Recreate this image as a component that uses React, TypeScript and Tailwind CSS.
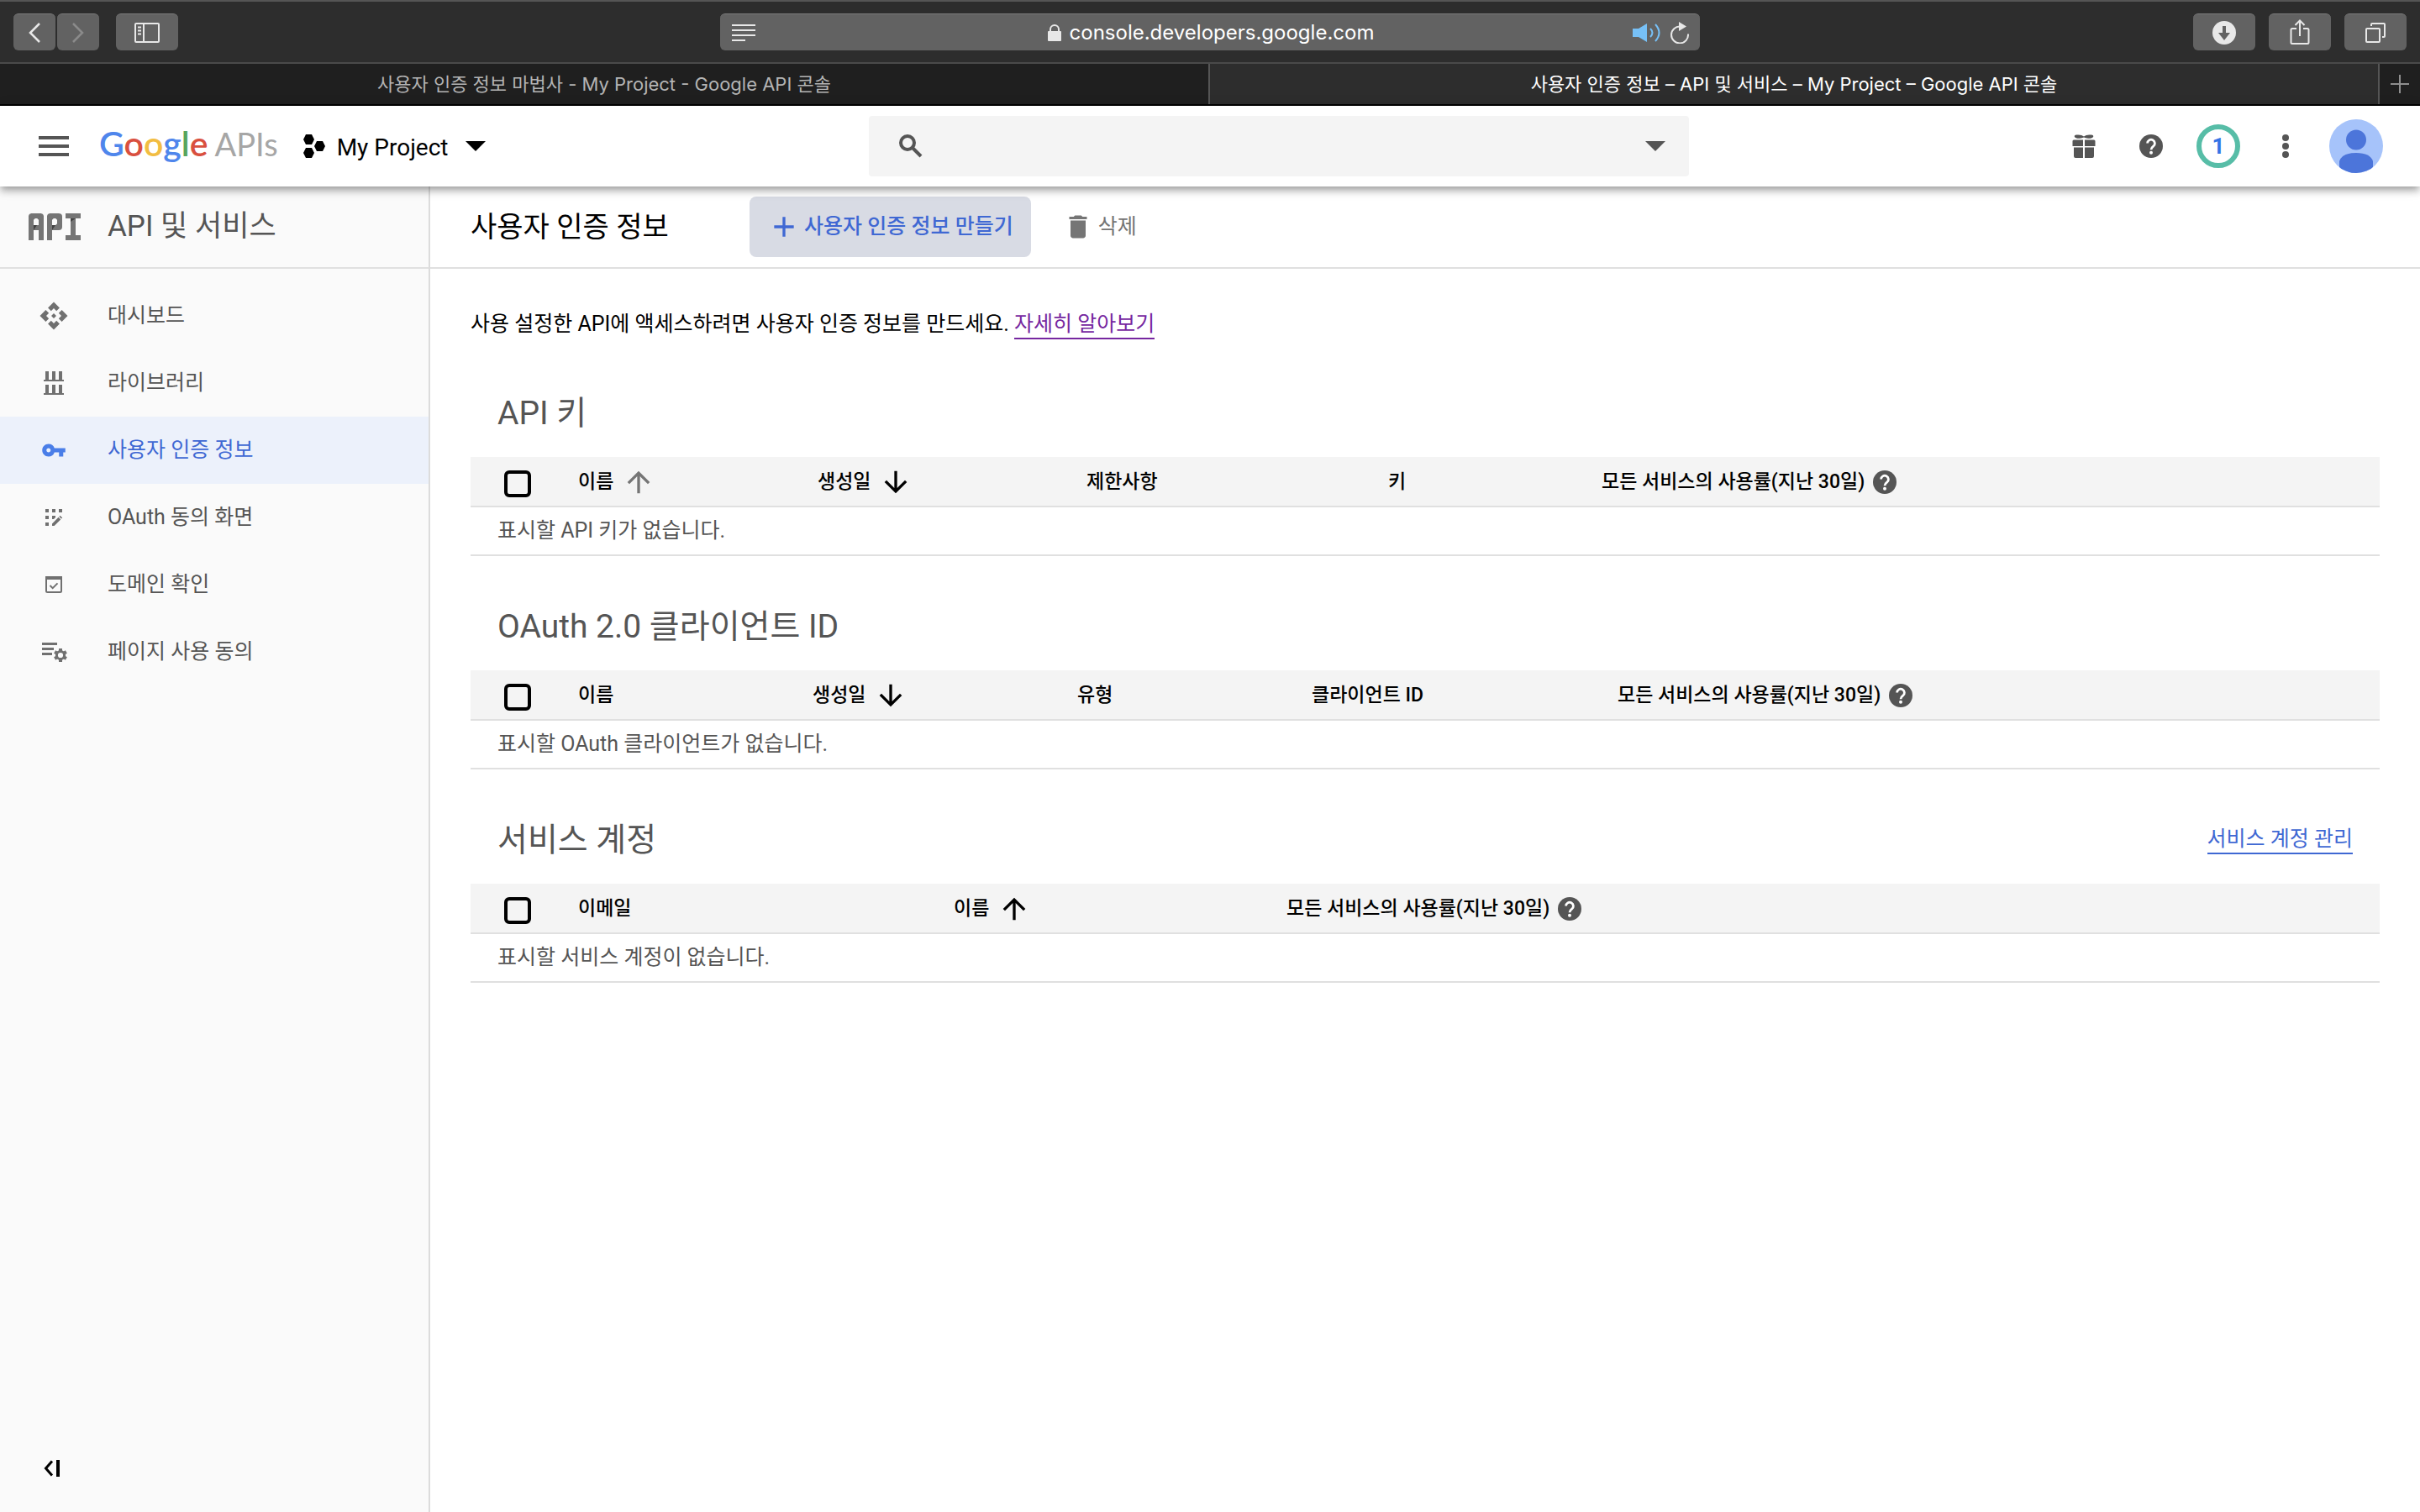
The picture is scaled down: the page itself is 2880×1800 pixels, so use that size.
import type { ReactNode } from 'react';
import { MdAdd, MdApi, MdArrowDownward, MdArrowUpward, MdDelete, MdVpnKey } from 'react-icons/md';

function HelpIcon() {
    return (
        <svg className="size-7 shrink-0" viewBox="0 0 28 28" fill="none">
            <circle cx="14" cy="14" r="14" fill="#555" />
            <path d="M9.600 10.600a4.400 4.400 0 1 1 7 3.600c-1.600 1.200-2.600 2-2.600 4" stroke="#fff" strokeWidth="2.800" />
            <circle cx="14" cy="21.800" r="2" fill="#fff" />
        </svg>
    );
}

function Caret() {
    return (
        <svg className="h-3 w-6 shrink-0" viewBox="0 0 24 12" fill="currentColor">
            <path d="M0 0h24L12 12z" />
        </svg>
    );
}

function ApiBadge() {
    return (
        <svg className="h-8 w-[62px] shrink-0" viewBox="0 0 62 32" fill="#757575">
            <rect x="0" y="3" width="6" height="29" />
            <rect x="12" y="3" width="6" height="29" />
            <rect x="3" y="0" width="12" height="6" />
            <circle cx="4" cy="4" r="4" />
            <circle cx="14" cy="4" r="4" />
            <rect x="6" y="14" width="6" height="6" />
            <rect x="22" y="3" width="6" height="29" />
            <rect x="34" y="4" width="6" height="12" />
            <rect x="25" y="0" width="11" height="6" />
            <circle cx="26" cy="4" r="4" />
            <circle cx="36" cy="4" r="4" />
            <circle cx="36" cy="16" r="4" />
            <rect x="28" y="14" width="8" height="6" />
            <rect x="44" y="0" width="18" height="6" />
            <rect x="50" y="0" width="6" height="32" />
            <rect x="44" y="26" width="18" height="6" />
            <path d="M6 14h4l-4 6zM28 14h4l-4 6zM50 6h6l-6 4z" fill="#424242" />
        </svg>
    );
}

function LibraryIcon() {
    return (
        <svg className="size-8" viewBox="0 0 32 32" fill="currentColor">
            <path d="M6 2h4v10H6zM14 2h4v10h-4zM22 2h4v10h-4zM4 12h24v2H4zM6 18h4v10H6zM14 18h4v10h-4zM22 18h4v10h-4zM4 28h24v2H4z" />
        </svg>
    );
}

function ConsentIcon() {
    return (
        <svg className="size-8" viewBox="0 0 32 32" fill="currentColor">
            <path d="M6 6h4v4H6zM14 6h4v4h-4zM22 6h4v4h-4zM6 14h4v4H6zM14 14h4v2l-2 2h-2zM6 22h4v4H6zM14 23.400l7.600-7.600 2.600 2.600-7.600 7.600H14zM22.400 15l1.200-1.200 2.600 2.600L25 17.600z" />
        </svg>
    );
}

function DomainIcon() {
    return (
        <svg className="size-8" viewBox="0 0 32 32" fill="none" stroke="currentColor" strokeWidth="2">
            <rect x="7" y="7" width="18" height="18" rx="1.500" />
            <path d="M6 8h20" strokeWidth="4" />
            <path d="M11.500 17l3.200 3.200 5.800-5.800" />
        </svg>
    );
}

function AgreementIcon() {
    return (
        <svg className="size-8" viewBox="0 0 32 32" fill="none" stroke="currentColor">
            <path d="M2 6.500h18M2 12.500h14M2 18.500h12" strokeWidth="3" />
            <circle cx="24" cy="20" r="4.600" strokeWidth="3" />
            <path d="M24 12v3M24 25v3M17.100 16l2.600 1.500M28.300 22.500l2.600 1.500M17.100 24l2.600-1.500M28.300 17.500l2.600-1.500" strokeWidth="4" />
        </svg>
    );
}

function ToolbarButton({ label, className, children }: { label: string; className: string; children: ReactNode }) {
    return (
        <button
            type="button"
            aria-label={label}
            className={`flex h-11 items-center justify-center rounded-md border-t border-[#7a7a7a] bg-[#626262] text-[#e8e8e8] ${className}`}
        >
            {children}
        </button>
    );
}

function BrowserChrome() {
    return (
        <div className="font-['Inter','Noto_Sans_CJK_KR',sans-serif]">
            <div className="grid h-[76px] grid-cols-[1fr_auto_1fr] items-center border-y-2 border-t-[#555] border-b-[#4a4a4a] bg-[#2d2d2d] px-4">
                <div className="flex">
                    <ToolbarButton label="뒤로" className="w-[50px]">
                        <svg className="h-6 w-4" viewBox="0 0 16 24" fill="none" stroke="currentColor" strokeWidth="2.500">
                            <path d="M14 1L3 12l11 11" />
                        </svg>
                    </ToolbarButton>
                    <ToolbarButton label="앞으로" className="ml-0.5 w-[50px]">
                        <svg className="h-6 w-4" viewBox="0 0 16 24" fill="none" stroke="#8b8b8b" strokeWidth="2.500">
                            <path d="M2 1l11 11L2 23" />
                        </svg>
                    </ToolbarButton>
                    <ToolbarButton label="사이드바" className="ml-5 w-[74px]">
                        <svg className="h-6 w-[30px]" viewBox="0 0 30 24" fill="none" stroke="currentColor" strokeWidth="2">
                            <rect x="1" y="1" width="28" height="22" rx="1" />
                            <path d="M11 1v22M4 5.500h4M4 9.500h4M4 13.500h4" />
                        </svg>
                    </ToolbarButton>
                </div>

                <div className="flex h-11 w-[1166px] items-center rounded-md border-t border-[#7a7a7a] bg-[#626262] pr-3 pl-3.5 text-[#e8e8e8]">
                    <svg className="h-5 w-7 shrink-0" viewBox="0 0 28 20" fill="currentColor">
                        <path d="M0 0h28v2H0zM0 6h28v2H0zM0 12h28v2H0zM0 18h16v2H0z" />
                    </svg>
                    <label className="ml-10 flex flex-1 items-center justify-center gap-2.5">
                        <svg className="h-5 w-4" viewBox="0 0 16 20" fill="currentColor">
                            <rect y="8" width="16" height="12" rx="1" />
                            <path d="M3 9V6a5 5 0 0 1 10 0v3" fill="none" stroke="currentColor" strokeWidth="2" />
                        </svg>
                        <input
                            aria-label="주소"
                            defaultValue="console.developers.google.com"
                            className="field-sizing-content text-2xl text-white outline-none"
                        />
                    </label>
                    <svg className="h-6 w-[34px] shrink-0" viewBox="0 0 34 24" fill="none" stroke="#77c0f6" strokeWidth="2">
                        <path d="M0 7h7l10-6v22l-10-6H0z" fill="#77c0f6" stroke="none" />
                        <path d="M21 7q5 5 0 10M27 2q9 10 0 20" />
                    </svg>
                    <svg className="ml-2.5 h-[26px] w-6 shrink-0" viewBox="0 0 24 26" fill="none" stroke="currentColor" strokeWidth="2">
                        <path d="M13 5.500a10 10 0 1 0 9 9" />
                        <path d="M11 0l9 5.500-9 5.500z" fill="currentColor" stroke="none" />
                    </svg>
                </div>

                <div className="flex justify-end gap-4">
                    <ToolbarButton label="다운로드" className="w-[74px]">
                        <svg className="size-7" viewBox="0 0 28 28">
                            <circle cx="14" cy="14" r="14" fill="currentColor" />
                            <path d="M12 6h4v8h5l-7 9-7-9h5z" fill="#626262" />
                        </svg>
                    </ToolbarButton>
                    <ToolbarButton label="공유" className="w-[74px]">
                        <svg className="h-8 w-6" viewBox="0 0 24 32" fill="none" stroke="currentColor" strokeWidth="2">
                            <path d="M8 11H3q-1.500 0-1.500 1.500v15q0 1.500 1.500 1.500h18q1.500 0 1.500-1.500v-15Q22.500 11 21 11h-5M12 20V2M6.500 7L12 1.500 17.500 7" />
                        </svg>
                    </ToolbarButton>
                    <ToolbarButton label="탭 개요" className="w-[74px]">
                        <svg className="size-6" viewBox="0 0 24 24" fill="none" stroke="currentColor" strokeWidth="2">
                            <rect x="1" y="7" width="16" height="16" rx="1" />
                            <path d="M7 4V2q0-1 1-1h14q1 0 1 1v14q0 1-1 1h-2" />
                        </svg>
                    </ToolbarButton>
                </div>
            </div>

            <div className="flex h-[50px] border-b-2 border-black bg-[#1f1f1f] text-[22px]">
                <button type="button" className="w-1/2 border-r-2 border-[#555] text-[#b4b4b4]">
                    사용자 인증 정보 마법사 - My Project - Google API 콘솔
                </button>
                <button type="button" className="flex-1 border-r-2 border-[#555] bg-[#2d2d2d] text-white">
                    사용자 인증 정보 – API 및 서비스 – My Project – Google API 콘솔
                </button>
                <button type="button" aria-label="새 탭" className="flex w-12 items-center justify-center">
                    <svg className="size-[22px]" viewBox="0 0 22 22" stroke="#8f8f8f" strokeWidth="2">
                        <path d="M11 0v22M0 11h22" />
                    </svg>
                </button>
            </div>
        </div>
    );
}

function AppHeader() {
    return (
        <header className="relative z-10 flex h-24 items-center bg-white shadow-[0_6px_8px_rgba(0,0,0,0.2),0_6px_6px_-4px_rgba(0,0,0,0.14),0_2px_16px_rgba(0,0,0,0.12)]">
            <div className="flex w-[1034px] shrink-0 items-center pl-[46px]">
                <button type="button" aria-label="메뉴">
                    <svg className="h-6 w-9" viewBox="0 0 36 24" fill="#555">
                        <path d="M0 0h36v4H0zM0 10h36v4H0zM0 20h36v4H0z" />
                    </svg>
                </button>
                <a href="#" className="ml-9 flex items-baseline gap-2 pb-1.5 font-['Lato',sans-serif] leading-[48px]">
                    <span className="text-[41px] font-semibold">
                        <span className="text-[#4f86ec]">G</span>
                        <span className="text-[#d9503f]">o</span>
                        <span className="text-[#f2bd42]">o</span>
                        <span className="text-[#4f86ec]">g</span>
                        <span className="text-[#58a55c]">l</span>
                        <span className="text-[#d9503f]">e</span>
                    </span>
                    <span className="text-[38px] text-[#a6a6a6]">APIs</span>
                </a>
                <button type="button" className="ml-[30px] flex items-center text-[28px]">
                    <svg className="h-7 w-[26px]" viewBox="0 0 26 28">
                        <path d="M3 0h7l3 6-3 6H3L0 6zM3 16h7l3 6-3 6H3l-3-6zM16 8h7l3 6-3 6h-7l-3-6z" />
                    </svg>
                    <span className="mr-5 ml-3.5 pt-1">My Project</span>
                    <Caret />
                </button>
            </div>

            <div className="flex h-[72px] max-w-[976px] flex-1 items-center rounded-sm bg-[#f4f4f4] pr-7 pl-9 text-[#555]">
                <svg className="size-7" viewBox="0 0 28 28" fill="none" stroke="currentColor" strokeWidth="4">
                    <circle cx="10" cy="10" r="8" />
                    <path d="M15.500 15.500L26 26" />
                </svg>
                <input aria-label="검색" className="h-full flex-1 px-4 text-[25px] outline-none" />
                <button type="button" aria-label="검색 범위">
                    <Caret />
                </button>
            </div>

            <div className="ml-auto flex items-center pr-11 *:flex *:items-center *:justify-center">
                <button type="button" aria-label="무료 체험" className="size-20">
                    <svg className="size-7" viewBox="0 0 28 28" fill="#555">
                        <path d="M3 3Q2 1 5 .6q6-.8 9 2Q17-.2 23 .6q3 .4 2 2.400-1 2-6 1.800-3-.2-5-1.200-2 1-5 1.200Q4 5 3 3z" />
                        <path d="M2 6.500h11v7.500H.5V8Q.5 6.500 2 6.500zM15 6.500h11q1.500 0 1.500 1.500v6H15zM2 15.500h11V28H4q-2 0-2-2zM15 15.500h11V26q0 2-2 2h-9z" />
                    </svg>
                </button>
                <button type="button" aria-label="도움말" className="size-20">
                    <HelpIcon />
                </button>
                <button type="button" aria-label="알림" className="size-20">
                    <span className="size-[52px] rounded-full border-6 border-[#57bda7] text-[26px] leading-10 font-bold text-[#3473e5]">
                        1
                    </span>
                </button>
                <button type="button" aria-label="더보기" className="size-20">
                    <svg className="h-7 w-2" viewBox="0 0 8 28" fill="#555">
                        <circle cx="4" cy="4" r="4" />
                        <circle cx="4" cy="14" r="4" />
                        <circle cx="4" cy="24" r="4" />
                    </svg>
                </button>
                <button type="button" aria-label="계정" className="ml-3 size-16 overflow-hidden rounded-full bg-[#a6c3fa]">
                    <svg className="size-16" viewBox="0 0 64 64" fill="#4c75da">
                        <circle cx="32" cy="24.500" r="12" />
                        <path d="M12 64V50q3-10 20-10t20 10v14z" />
                    </svg>
                </button>
            </div>
        </header>
    );
}

const NAV_ITEMS = [
    { label: '대시보드', icon: <MdApi className="size-9" /> },
    { label: '라이브러리', icon: <LibraryIcon /> },
    { label: '사용자 인증 정보', icon: <MdVpnKey className="size-[30px]" />, active: true },
    { label: 'OAuth 동의 화면', icon: <ConsentIcon /> },
    { label: '도메인 확인', icon: <DomainIcon /> },
    { label: '페이지 사용 동의', icon: <AgreementIcon /> },
];

function Sidebar() {
    return (
        <aside className="flex w-[512px] shrink-0 flex-col border-r-2 border-[#dcdcdc] bg-[#fafafa]">
            <div className="flex h-[98px] items-center border-b-2 border-[#e0e0e0] pl-[34px]">
                <ApiBadge />
                <span className="ml-8 text-[35px] text-[#555]">API 및 서비스</span>
            </div>
            <nav className="pt-4">
                {NAV_ITEMS.map((item) => (
                    <a
                        key={item.label}
                        href="#"
                        className={`flex h-20 items-center text-[25px] ${
                            item.active ? 'bg-[#ecf1fb] text-[#3f68d3]' : 'text-[#555]'
                        }`}
                    >
                        <span className={`flex w-32 justify-center ${item.active ? 'text-[#4a7ee8]' : 'text-[#707070]'}`}>
                            {item.icon}
                        </span>
                        {item.label}
                    </a>
                ))}
            </nav>
            <button type="button" aria-label="메뉴 접기" className="mt-auto mb-[42px] ml-[52px] w-5">
                <svg className="size-5" viewBox="0 0 20 20" fill="none" stroke="#000" strokeWidth="3">
                    <path d="M10 1.500L2.500 10l7.500 8.500" />
                    <path d="M17 0v20" strokeWidth="4" />
                </svg>
            </button>
        </aside>
    );
}

type Column = { label: string; width: string; sort?: 'up' | 'down' | 'inactive'; help?: boolean };

function CredentialTable({ title, columns, empty, link }: { title: string; columns: Column[]; empty: string; link?: string }) {
    return (
        <section>
            <div className="flex items-center justify-between px-8 pb-[26px]">
                <h2 className="text-[39px] leading-[52px] text-[#555]">{title}</h2>
                {link && (
                    <a href="#" className="border-b-2 border-[#3f68d3] text-[25px] leading-8 text-[#3f68d3]">
                        {link}
                    </a>
                )}
            </div>
            <table className="w-full table-fixed text-left">
                <thead>
                    <tr className="h-[59px] border-b-2 border-[#e0e0e0] bg-[#f4f4f4] text-[23px] text-black">
                        <th className="w-32 pt-1.5 pl-10">
                            <input
                                type="checkbox"
                                aria-label={`${title} 모두 선택`}
                                className="block size-8 appearance-none rounded-md border-4 border-black"
                            />
                        </th>
                        {columns.map((col) => (
                            <th key={col.label} className={`pt-0.5 font-medium ${col.width}`}>
                                <span className="flex items-center gap-2.5">
                                    {col.label}
                                    {col.sort === 'down' && <MdArrowDownward className="size-10" />}
                                    {col.sort === 'up' && <MdArrowUpward className="size-10" />}
                                    {col.sort === 'inactive' && <MdArrowUpward className="size-10 text-[#757575]" />}
                                    {col.help && <HelpIcon />}
                                </span>
                            </th>
                        ))}
                    </tr>
                </thead>
                <tbody>
                    <tr className="h-[58px] border-b-2 border-[#e0e0e0]">
                        <td colSpan={columns.length + 1} className="pl-8 text-[25px] text-[#555]">
                            {empty}
                        </td>
                    </tr>
                </tbody>
            </table>
        </section>
    );
}

const USAGE = '모든 서비스의 사용률(지난 30일)';

export default function App() {
    return (
        <div className="flex min-h-screen flex-col bg-white font-['Roboto','Noto_Sans_CJK_KR',sans-serif] text-black">
            <BrowserChrome />
            <AppHeader />
            <div className="flex flex-1">
                <Sidebar />
                <main className="min-w-0 flex-1">
                    <div className="flex h-[98px] items-center border-b-2 border-[#e0e0e0] pl-12">
                        <h1 className="w-[332px] text-[34px]">사용자 인증 정보</h1>
                        <button
                            type="button"
                            className="flex h-[72px] items-center gap-1 rounded-lg bg-[#d8dbe4] px-[21px] text-[25px] font-medium text-[#3f68d3]"
                        >
                            <MdAdd className="size-10" />
                            사용자 인증 정보 만들기
                        </button>
                        <button type="button" className="ml-[38px] flex items-center gap-1.5 text-[25px] text-[#757575]">
                            <MdDelete className="size-9" />
                            삭제
                        </button>
                    </div>

                    <div className="flex flex-col gap-[58px] px-12 pt-[50px]">
                        <p className="pb-1 text-[25px] leading-8">
                            사용 설정한 API에 액세스하려면 사용자 인증 정보를 만드세요.{' '}
                            <a href="#" className="inline-block border-b-2 border-[#7627a0] text-[#7627a0]">
                                자세히 알아보기
                            </a>
                        </p>
                        <CredentialTable
                            title="API 키"
                            empty="표시할 API 키가 없습니다."
                            columns={[
                                { label: '이름', width: 'w-[285px]', sort: 'inactive' },
                                { label: '생성일', width: 'w-[320px]', sort: 'down' },
                                { label: '제한사항', width: 'w-[359px]' },
                                { label: '키', width: 'w-[254px]' },
                                { label: USAGE, width: 'w-auto', help: true },
                            ]}
                        />
                        <CredentialTable
                            title="OAuth 2.0 클라이언트 ID"
                            empty="표시할 OAuth 클라이언트가 없습니다."
                            columns={[
                                { label: '이름', width: 'w-[279px]' },
                                { label: '생성일', width: 'w-[315px]', sort: 'down' },
                                { label: '유형', width: 'w-[279px]' },
                                { label: '클라이언트 ID', width: 'w-[364px]' },
                                { label: USAGE, width: 'w-auto', help: true },
                            ]}
                        />
                        <CredentialTable
                            title="서비스 계정"
                            empty="표시할 서비스 계정이 없습니다."
                            link="서비스 계정 관리"
                            columns={[
                                { label: '이메일', width: 'w-[447px]' },
                                { label: '이름', width: 'w-[396px]', sort: 'up' },
                                { label: USAGE, width: 'w-auto', help: true },
                            ]}
                        />
                    </div>
                </main>
            </div>
        </div>
    );
}
